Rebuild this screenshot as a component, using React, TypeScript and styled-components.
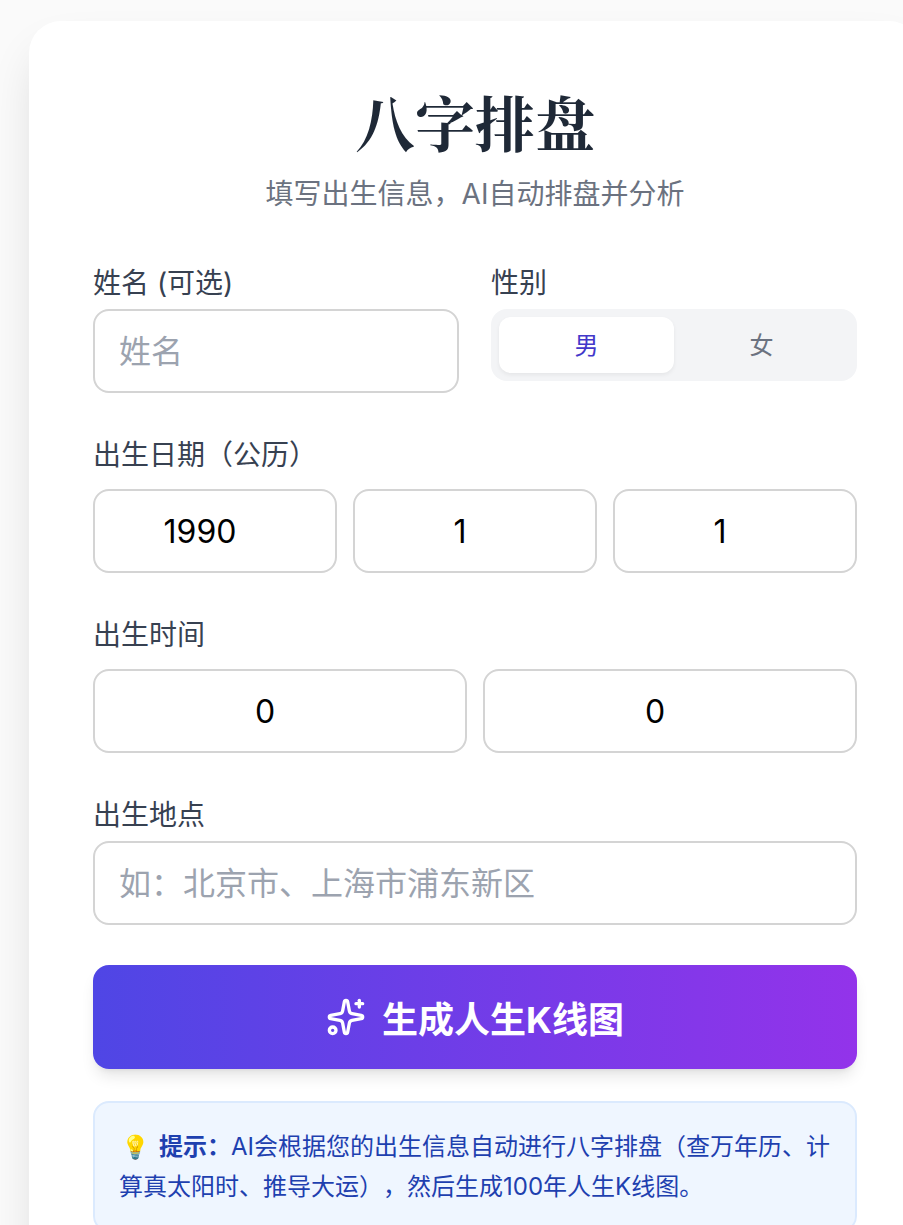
import styled, { createGlobalStyle } from "styled-components";
import { Sparkles } from "lucide-react";

const SANS = `Inter, "Noto Sans CJK SC", "Noto Sans", sans-serif`;

const GlobalStyle = createGlobalStyle`
  html, body {
    margin: 0;
    height: 100%;
    overflow: hidden;
    background: #fafafa;
  }
  * {
    box-sizing: border-box;
  }
`;

const Page = styled.div`
  width: 950px;
  padding: 21px 29px 0;
  font-family: ${SANS};
`;

const Card = styled.main`
  width: 892px;
  padding: 64px;
  background: #fff;
  border-radius: 32px;
  box-shadow: 0 25px 50px -12px rgba(0, 0, 0, 0.16);
`;

const Header = styled.header`
  text-align: center;
  margin-bottom: 46px;
`;

const Title = styled.h1`
  margin: 0 0 16px;
  font-family: "Noto Serif CJK SC", "Noto Serif", "Liberation Serif", "Noto Sans CJK SC", serif;
  font-size: 60px;
  line-height: 72px;
  font-weight: 700;
  color: #1f2937;
`;

const Subtitle = styled.p`
  margin: 0;
  font-size: 28px;
  line-height: 42px;
  color: #6b7280;
`;

const Form = styled.form`
  display: flex;
  flex-direction: column;
  gap: 40px;
`;

const Row = styled.div`
  display: grid;
  grid-template-columns: 1fr 1fr;
  gap: 32px;
`;

const Field = styled.div``;

const Label = styled.label<{ $gap?: number }>`
  display: block;
  margin-bottom: ${(p) => p.$gap ?? 4}px;
  font-size: 28px;
  line-height: 44px;
  font-weight: 400;
  color: #374151;
`;

const Inputs = styled.div<{ $cols: number }>`
  display: grid;
  grid-template-columns: repeat(${(p) => p.$cols}, 1fr);
  gap: 16px;
`;

const Input = styled.input<{ $num?: boolean }>`
  display: block;
  width: 100%;
  height: 84px;
  padding: ${(p) => (p.$num ? "0 54px 0 24px" : "0 24px")};
  border: 2px solid #d4d4d4;
  border-radius: 16px;
  background: #fff;
  font-family: ${SANS};
  font-size: 32px;
  color: #000;
  text-align: ${(p) => (p.$num ? "center" : "left")};
  outline: none;
  &::placeholder {
    color: #9ca3af;
  }
`;

const Toggle = styled.div`
  display: flex;
  padding: 8px;
  background: #f3f4f6;
  border-radius: 16px;
`;

const ToggleBtn = styled.button<{ $active?: boolean }>`
  flex: 1;
  height: 56px;
  padding: 0 0 4px;
  border: 0;
  border-radius: 12px;
  background: ${(p) => (p.$active ? "#fff" : "transparent")};
  box-shadow: ${(p) => (p.$active ? "0 2px 4px rgba(0, 0, 0, 0.06)" : "none")};
  color: ${(p) => (p.$active ? "#4338ca" : "#6b7280")};
  font-family: ${SANS};
  font-size: 24px;
  font-weight: 400;
`;

const Submit = styled.button`
  display: flex;
  align-items: center;
  justify-content: center;
  gap: 16px;
  width: 100%;
  height: 104px;
  padding: 0;
  border: 0;
  border-radius: 16px;
  background: linear-gradient(to right, #4f46e5, #9333ea);
  box-shadow: 0 10px 15px -3px rgba(0, 0, 0, 0.1), 0 4px 6px -4px rgba(0, 0, 0, 0.1);
  color: #fff;
  font-family: ${SANS};
  font-size: 36px;
  font-weight: 700;
`;

const Tip = styled.div`
  margin-top: -8px;
  padding: 24px;
  background: #eff6ff;
  border: 2px solid #dbeafe;
  border-radius: 16px;
  font-size: 24px;
  line-height: 39px;
  color: #1e40af;
  text-spacing-trim: space-all;
  strong {
    font-weight: 700;
  }
`;

const Bulb = styled.span`
  margin: 0 9px 0 2px;
  font-size: 23px;
`;

export default function App() {
  return (
    <Page>
      <GlobalStyle />
      <Card>
        <Header>
          <Title>八字排盘</Title>
          <Subtitle>填写出生信息，AI自动排盘并分析</Subtitle>
        </Header>
        <Form>
          <Row>
            <Field>
              <Label>姓名 (可选)</Label>
              <Input placeholder="姓名" />
            </Field>
            <Field>
              <Label>性别</Label>
              <Toggle>
                <ToggleBtn type="button" $active>
                  男
                </ToggleBtn>
                <ToggleBtn type="button">女</ToggleBtn>
              </Toggle>
            </Field>
          </Row>
          <Field>
            <Label $gap={12}>出生日期（公历）</Label>
            <Inputs $cols={3}>
              <Input $num defaultValue="1990" />
              <Input $num defaultValue="1" />
              <Input $num defaultValue="1" />
            </Inputs>
          </Field>
          <Field>
            <Label $gap={12}>出生时间</Label>
            <Inputs $cols={2}>
              <Input $num defaultValue="0" />
              <Input $num defaultValue="0" />
            </Inputs>
          </Field>
          <Field>
            <Label>出生地点</Label>
            <Input placeholder="如：北京市、上海市浦东新区" />
          </Field>
          <Submit type="button">
            <Sparkles size={40} strokeWidth={2} />
            生成人生K线图
          </Submit>
          <Tip>
            <Bulb>💡</Bulb>
            <strong>提示：</strong>AI会根据您的出生信息自动进行八字排盘（查万年历、计算真太阳时、推导大运），然后生成100年人生K线图。
          </Tip>
        </Form>
      </Card>
    </Page>
  );
}
